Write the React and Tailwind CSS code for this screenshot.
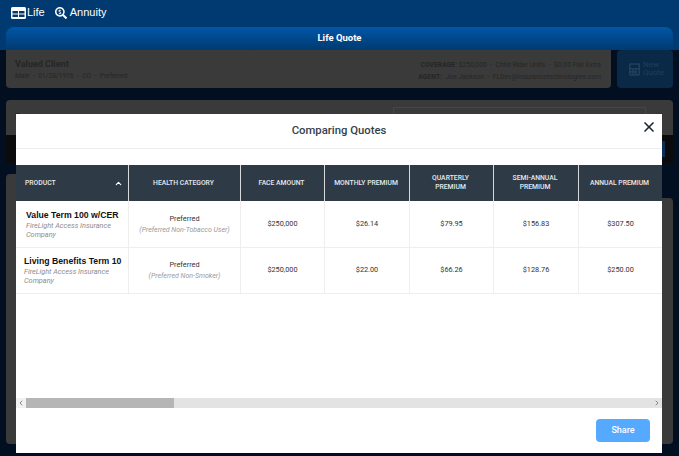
import { ChevronUp, ChevronLeft, ChevronRight, X } from 'lucide-react';
import { FaCalculator, FaSearchDollar } from 'react-icons/fa';

const rows = [
  {
    name: 'Value Term 100 w/CER',
    pad: 'pl-2.5',
    height: 'h-[47px]',
    sub: '(Preferred Non-Tobacco User)',
    vals: ['$250,000', '$26.14', '$79.95', '$156.83', '$307.50'],
  },
  {
    name: 'Living Benefits Term 10',
    pad: 'pl-2',
    height: 'h-[46px]',
    sub: '(Preferred Non-Smoker)',
    vals: ['$250,000', '$22.00', '$66.26', '$128.76', '$250.00'],
  },
];

const heads = ['HEALTH CATEGORY', 'FACE AMOUNT', 'MONTHLY PREMIUM', 'QUARTERLY\nPREMIUM', 'SEMI-ANNUAL\nPREMIUM', 'ANNUAL PREMIUM'];
const cols = 'grid grid-cols-[113px_112px_84px_85px_84px_85px_84px]';
const gap = '\u00a0\u00a0-\u00a0\u00a0';

function LifeIcon() {
  return (
    <svg width="15" height="12" viewBox="0 0 15 12" className="shrink-0">
      <rect x="0" y="0" width="15" height="12" rx="1.5" fill="#fff" />
      <rect x="1.5" y="4" width="5.5" height="2.5" fill="#003a70" />
      <rect x="8" y="4" width="5.5" height="2.5" fill="#003a70" />
      <rect x="1.5" y="7.5" width="5.5" height="2.5" fill="#003a70" />
      <rect x="8" y="7.5" width="5.5" height="2.5" fill="#003a70" />
    </svg>
  );
}

export default function App() {
  return (
    <div className="relative h-[456px] w-[679px] overflow-hidden bg-[#010f20] font-['Roboto',sans-serif]">
      <header className="h-[50px] bg-[#003a70] pt-[3px]">
        <div className="flex h-[19px] items-center pl-[11px] font-['Liberation_Sans',sans-serif] text-[11px] text-white">
          <span className="flex items-center gap-px">
            <LifeIcon />
            Life
          </span>
          <span className="ml-[10px] flex items-center gap-[3px]">
            <FaSearchDollar className="h-3 w-3" />
            Annuity
          </span>
        </div>
        <div className="mx-[6px] mt-[5px] flex h-[23px] items-center justify-center rounded-t-lg bg-gradient-to-b from-[#0057a8] to-[#003a70] text-[9.5px] font-bold text-white">
          Life Quote
        </div>
      </header>

      <div className="mx-[6px] flex h-[38px] gap-[6px]">
        <div className="flex flex-1 justify-between rounded-b-sm bg-[#3a3a3a] pl-[9px] pr-[10px] pt-[9px] text-[#262626]">
          <div>
            <div className="text-[9px] font-bold leading-[11px]">Valued Client</div>
            <div className="mt-[2px] text-[6.7px] leading-[9px]">Male{gap}01/28/1976{gap}CO{gap}Preferred</div>
          </div>
          <div className="text-right text-[6.8px] leading-[12px]">
            <div><b>COVERAGE:</b>{'\u00a0'}$250,000{gap}Child Rider Units{gap}$0.00 Flat Extra</div>
            <div><b>AGENT:</b>{'\u00a0\u00a0'}Joe Jackson{gap}FLDev@insurancetechnologies.com</div>
          </div>
        </div>
        <div className="flex w-[56px] items-center gap-[3px] rounded-sm bg-[#0a2947] pl-[12px] text-[8px] leading-[8px] text-[#1f3f5e]">
          <FaCalculator className="h-[15px] w-[11px] shrink-0" />
          <span>New Quote</span>
        </div>
      </div>

      <div className="mx-[6px] mt-[12px] flex h-[35px] justify-end rounded-t-sm bg-[#3a3a3a] pr-[9px] pt-[7px] text-[#222222]">
        <div className="flex-1 pl-[9px] pt-[5px] text-[9px] font-bold leading-[10px]">Sort</div>
        <div className="h-[28px] w-[253px] border border-b-0 border-[#454545]" />
        <div className="w-[18px] pl-[9px] pt-[5px] text-[9px] font-bold leading-[10px] text-[#16334f]">lll</div>
      </div>
      <div className="mx-[6px] flex h-[28px] justify-end bg-[#0b0b0b] pr-[8px] pt-[6px]">
        <div className="h-[16px] w-[20px] bg-[#0a3058]" />
      </div>
      <div className="mx-[6px] mt-[11px] flex h-[270px] items-end">
        <div className="h-full flex-1 rounded-l-sm bg-[#3a3a3a]" />
        <div className="h-[246px] w-[20px] rounded-r-sm bg-[#3a3a3a]" />
      </div>

      <div className="absolute left-4 top-[114px] flex h-[339px] w-[646px] flex-col bg-white">
        <div className="relative flex h-[35px] shrink-0 items-center justify-center border-b border-[#eeeeee] text-[11.3px] font-medium text-[#343f4b]">
          Comparing Quotes
          <X className="absolute right-[5px] top-[5px] h-4 w-4 text-[#1f2933]" strokeWidth={2.5} />
        </div>

        <div className="mt-4 overflow-hidden">
          <div className={`${cols} h-9 w-max bg-[#2e3b47] text-center text-[6.8px] font-medium leading-[9px] text-[#e6e9ec]`}>
            <div className="flex items-center justify-between border-r border-[#d5d9dc] pl-[9px] pr-[5px]">
              PRODUCT
              <ChevronUp className="h-[9px] w-[9px] text-white" strokeWidth={3} />
            </div>
            {heads.map((h) => (
              <div key={h} className="flex items-center justify-center whitespace-pre border-r border-[#d5d9dc] pr-[2px]">
                {h}
              </div>
            ))}
          </div>
          {rows.map((r) => (
            <div key={r.name} className={`${cols} ${r.height} w-max border-b border-[#eeeeee] text-center text-[7.3px] text-[#333333]`}>
              <div className={`flex flex-col justify-center overflow-hidden border-r border-[#eeeeee] text-left ${r.pad}`}>
                <div className="whitespace-nowrap font-['Liberation_Sans',sans-serif] text-[8.7px] font-bold leading-[11px] text-[#111111]">{r.name}</div>
                <div className="w-[90px] text-[7.3px] italic leading-[9px] text-[#8c8c8c]">FireLight Access Insurance Company</div>
              </div>
              <div className="flex flex-col items-center justify-center border-r border-[#eeeeee]">
                <div className="leading-[10px]">Preferred</div>
                <div className="mt-[1px] text-[7px] italic leading-[10px] text-[#9a9a9a]">{r.sub}</div>
              </div>
              {r.vals.map((v) => (
                <div key={v} className="flex items-center justify-center border-r border-[#eeeeee]">{v}</div>
              ))}
            </div>
          ))}
        </div>

        <div className="mt-[104px] flex h-[10px] items-center bg-[#e3e3e3]">
          <div className="flex h-full w-[10px] items-center justify-center bg-[#f1f1f1]">
            <ChevronLeft className="h-2 w-2 text-[#888888]" strokeWidth={3} />
          </div>
          <div className="h-full w-[148px] bg-[#b5b5b5]" />
          <div className="flex-1" />
          <ChevronRight className="mr-[1px] h-2 w-2 text-[#888888]" strokeWidth={3} />
        </div>

        <div className="flex justify-end pr-[12px] pt-[11px]">
          <button className="h-[23px] w-[54px] rounded-sm bg-[#55aaff] text-[9px] font-medium text-white">Share</button>
        </div>
      </div>
    </div>
  );
}
